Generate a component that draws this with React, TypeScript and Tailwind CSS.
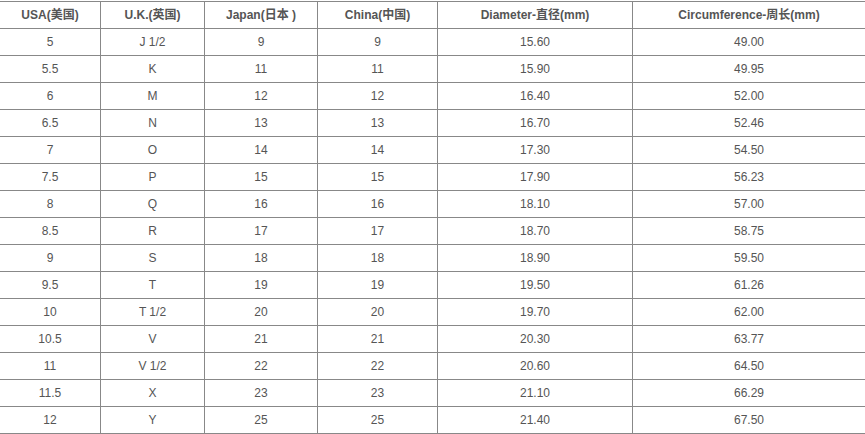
const headers = ["USA(美国)", "U.K.(英国)", "Japan(日本 )", "China(中国)", "Diameter-直径(mm)", "Circumference-周长(mm)"];

const rows = [
  ["5", "J 1/2", "9", "9", "15.60", "49.00"],
  ["5.5", "K", "11", "11", "15.90", "49.95"],
  ["6", "M", "12", "12", "16.40", "52.00"],
  ["6.5", "N", "13", "13", "16.70", "52.46"],
  ["7", "O", "14", "14", "17.30", "54.50"],
  ["7.5", "P", "15", "15", "17.90", "56.23"],
  ["8", "Q", "16", "16", "18.10", "57.00"],
  ["8.5", "R", "17", "17", "18.70", "58.75"],
  ["9", "S", "18", "18", "18.90", "59.50"],
  ["9.5", "T", "19", "19", "19.50", "61.26"],
  ["10", "T 1/2", "20", "20", "19.70", "62.00"],
  ["10.5", "V", "21", "21", "20.30", "63.77"],
  ["11", "V 1/2", "22", "22", "20.60", "64.50"],
  ["11.5", "X", "23", "23", "21.10", "66.29"],
  ["12", "Y", "25", "25", "21.40", "67.50"],
];

export default function App() {
  return (
    <div className="h-[434px] w-[865px] overflow-hidden bg-white pt-px font-['Liberation_Sans','Noto_Sans_CJK_SC',sans-serif] text-[12px] text-[#555555]">
      <table className="w-[865px] table-fixed border-separate border-spacing-0">
        <colgroup>
          <col className="w-[101px]" />
          <col className="w-[104px]" />
          <col className="w-[113px]" />
          <col className="w-[120px]" />
          <col className="w-[195px]" />
          <col className="w-[232px]" />
        </colgroup>
        <thead>
          <tr>
            {headers.map((h, i) => (
              <th
                key={h}
                className={
                  "h-[28px] border-y border-[#888888] p-0 text-center align-middle font-bold " +
                  (i < 5 ? "border-r" : "")
                }
              >
                {h}
              </th>
            ))}
          </tr>
        </thead>
        <tbody>
          {rows.map((r, ri) => (
            <tr key={ri}>
              {r.map((c, i) => (
                <td
                  key={i}
                  className={
                    "h-[27px] border-b border-[#888888] p-0 text-center align-middle " +
                    (i < 5 ? "border-r" : "")
                  }
                >
                  {c}
                </td>
              ))}
            </tr>
          ))}
        </tbody>
      </table>
    </div>
  );
}
